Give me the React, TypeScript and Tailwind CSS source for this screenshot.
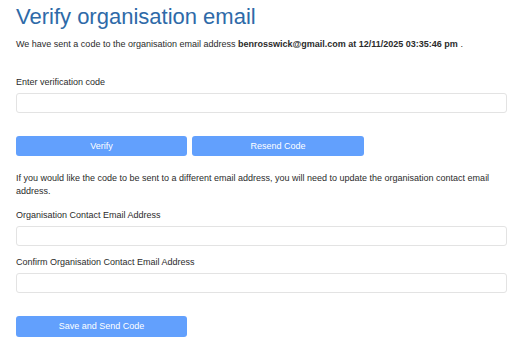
import React from "react";

export default function App() {
  const font = { fontFamily: '"Liberation Sans", Arial, Helvetica, sans-serif' };
  return (
    <div className="w-[524px] h-[354px] bg-white overflow-hidden" style={font}>
      <div className="pl-4 pr-[17px] pt-[5px] text-[9px] leading-[13px] text-[#2b2b2b]">
        <h1 className="text-[22px] leading-[24px] text-[#2e6aa8] font-normal">
          Verify organisation email
        </h1>
        <p className="mt-[9px]">
          We have sent a code to the organisation email address{" "}
          <span className="font-bold">benrosswick@gmail.com at 12/11/2025 03:35:46 pm</span> .
        </p>
        <label className="block mt-[25px]">Enter verification code</label>
        <input
          type="text"
          className="block mt-[4px] w-full h-[20px] rounded-[3px] border border-[#e3e3e3] bg-white outline-none"
        />
        <div className="flex gap-[5px] mt-[23px]">
          <button className="w-[171px] h-[20px] rounded-[3px] bg-[#62a0fd] text-white text-[9px]">
            Verify
          </button>
          <button className="w-[172px] h-[20px] rounded-[3px] bg-[#62a0fd] text-white text-[9px]">
            Resend Code
          </button>
        </div>
        <p className="mt-[16px]">
          If you would like the code to be sent to a different email address, you will need to update the
          organisation contact email address.
        </p>
        <label className="block mt-[11px]">Organisation Contact Email Address</label>
        <input
          type="text"
          className="block mt-[4px] w-full h-[20px] rounded-[3px] border border-[#e3e3e3] bg-white outline-none"
        />
        <label className="block mt-[10px]">Confirm Organisation Contact Email Address</label>
        <input
          type="text"
          className="block mt-[4px] w-full h-[20px] rounded-[3px] border border-[#e3e3e3] bg-white outline-none"
        />
        <button className="block mt-[23px] w-[171px] h-[21px] rounded-[3px] bg-[#62a0fd] text-white text-[9px]">
          Save and Send Code
        </button>
      </div>
    </div>
  );
}
